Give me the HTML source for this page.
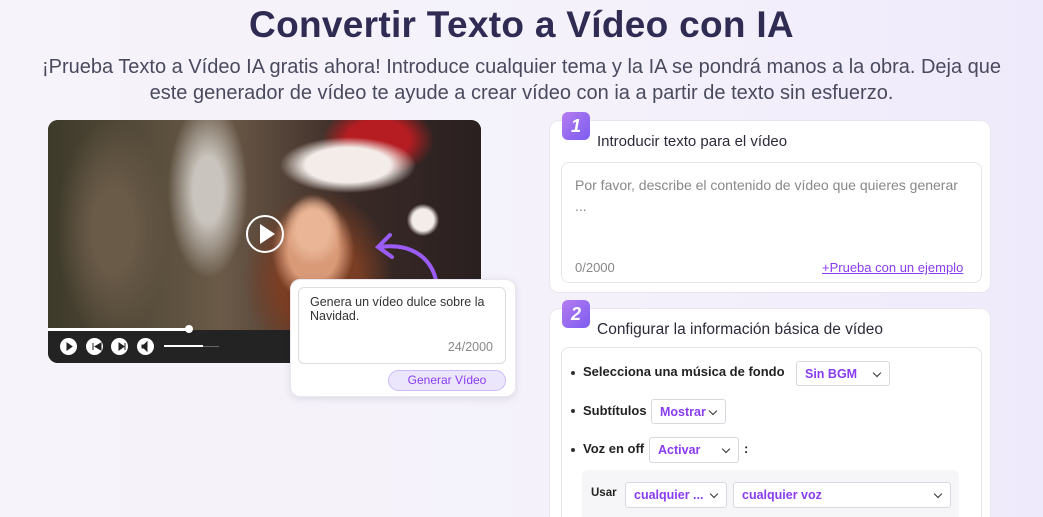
<!DOCTYPE html>
<html><head><meta charset="utf-8"><style>
*{margin:0;padding:0;box-sizing:border-box}
html,body{width:1043px;height:517px;overflow:hidden}
body{background:linear-gradient(90deg,#f6f3fa,#f4f1fb 60%,#efeafb);font-family:"Liberation Sans",sans-serif;position:relative;color:#2a2a3a}
.a{position:absolute}
h1{position:absolute;left:0;width:1043px;top:4px;text-align:center;font-size:37px;font-weight:bold;color:#2f2b52;letter-spacing:.3px}
.sub{position:absolute;left:0;width:1043px;top:54px;text-align:center;font-size:20px;line-height:26px;color:#4a4a5e}
.card{background:#fff;border:1px solid #e9e6f0;border-radius:10px}
.badge{width:28px;height:28px;border-radius:6px;background:linear-gradient(135deg,#b57cf0,#7b5cf0);color:#fff;font-weight:bold;font-style:italic;font-size:18px;text-align:center;line-height:28px}
.sel{border:1px solid #d8d8de;border-radius:3px;background:#fff;color:#8a3cf0;font-size:12.5px;padding-left:8px;display:flex;align-items:center;font-weight:bold}
.sel:after{content:"";position:absolute;right:9px;top:8px;width:5px;height:5px;border-right:1.5px solid #333;border-bottom:1.5px solid #333;transform:rotate(45deg)}
.lbl{font-size:13px;font-weight:bold;color:#222}
.dot{width:4px;height:4px;border-radius:50%;background:#333}
.cb{width:17px;height:17px;border-radius:50%;background:#fff}
</style></head><body>
<h1>Convertir Texto a Vídeo con IA</h1>
<div class="sub">¡Prueba Texto a Vídeo IA gratis ahora! Introduce cualquier tema y la IA se pondrá manos a la obra. Deja que<br>este generador de vídeo te ayude a crear vídeo con ia a partir de texto sin esfuerzo.</div>

<div class="a" style="left:48px;top:120px;width:433px;height:243px;border-radius:10px;overflow:hidden;background:#3a2a22">
 <div class="a" style="left:0;top:0;width:433px;height:210px;background:
 radial-gradient(ellipse 32px 40px at 265px 110px,#e9b596 50%,transparent 90%),
 radial-gradient(ellipse 55px 70px at 265px 130px,#d99a78 45%,transparent 75%),
 radial-gradient(ellipse 85px 35px at 300px 45px,#f3ece8 50%,transparent 80%),
 radial-gradient(ellipse 70px 45px at 330px 20px,#b51d22 45%,transparent 80%),
 radial-gradient(ellipse 18px 18px at 375px 100px,#f3ece8 60%,transparent 90%),
 radial-gradient(ellipse 100px 120px at 270px 160px,#7a3e24 40%,transparent 75%),
 radial-gradient(ellipse 70px 140px at 65px 110px,#6a5a48 30%,transparent 80%),
 radial-gradient(ellipse 50px 110px at 160px 70px,#c9c4bd 30%,transparent 80%),
 linear-gradient(90deg,#3d3a2a,#6b5a48 40%,#3a2a26 70%,#2a2020)"></div>
 <div class="a" style="left:0;top:210px;width:433px;height:33px;background:#232323"></div>
 <div class="a" style="left:0;top:208px;width:140px;height:3px;background:#fff"></div>
 <div class="a" style="left:137px;top:205px;width:8px;height:8px;border-radius:50%;background:#fff"></div>
 <div class="a cb" style="left:12px;top:218px"></div><div class="a cb" style="left:38px;top:218px"></div><div class="a cb" style="left:63px;top:218px"></div><div class="a cb" style="left:89px;top:218px"></div>
 <svg class="a" style="left:12px;top:218px" width="100" height="17"><path d="M7 5 L12 8.5 L7 12Z M33 5v7 M41 5 L35 8.5 L41 12Z M59 5 L64 8.5 L59 12Z M65 5v7 M82 7h2l3-3v9l-3-3h-2Z" fill="#222" stroke="#222" stroke-width="1"/></svg>
 <div class="a" style="left:116px;top:226px;width:55px;height:1px;background:#666"></div>
 <div class="a" style="left:116px;top:225px;width:39px;height:2px;background:#fff"></div>
 <div class="a" style="left:198px;top:95px;width:38px;height:38px;border-radius:50%;border:2px solid #fff"></div>
 <div class="a" style="left:212px;top:104px;width:0;height:0;border-left:15px solid #fff;border-top:10px solid transparent;border-bottom:10px solid transparent"></div>
 <svg class="a" style="left:320px;top:105px" width="75" height="60"><path d="M68 55 C62 30 40 18 12 22 M22 10 L10 22 L24 32" stroke="#9b5cf6" stroke-width="4" fill="none" stroke-linecap="round"/></svg>
</div>

<div class="a card" style="left:290px;top:279px;width:226px;height:118px;border-radius:10px;box-shadow:0 2px 8px rgba(0,0,0,.1)"></div>
<div class="a" style="left:298px;top:287px;width:208px;height:77px;border:1px solid #ddd;border-radius:6px;font-size:12.5px;line-height:14px;padding:7px 11px;color:#333">Genera un vídeo dulce sobre la Navidad.<div class="a" style="right:12px;bottom:9px;color:#888">24/2000</div></div>
<div class="a" style="left:388px;top:370px;width:118px;height:21px;border:1px solid #cbbcf5;border-radius:11px;background:#ece6fd;color:#8a3cf0;font-size:12px;text-align:center;line-height:19px">Generar Vídeo</div>

<div class="a card" style="left:549px;top:120px;width:442px;height:173px"></div>
<div class="a badge" style="left:562px;top:112px">1</div>
<div class="a" style="left:597px;top:133px;font-size:15px;color:#2a2a3a">Introducir texto para el vídeo</div>
<div class="a" style="left:561px;top:162px;width:421px;height:121px;border:1px solid #e4e4ea;border-radius:8px"></div>
<div class="a" style="left:575px;top:175px;font-size:14px;color:#888;line-height:21px">Por favor, describe el contenido de vídeo que quieres generar<br>...</div>
<div class="a" style="left:575px;top:260px;font-size:13px;color:#888">0/2000</div>
<div class="a" style="left:822px;top:260px;font-size:13px;color:#8a3cf0;text-decoration:underline">+Prueba con un ejemplo</div>

<div class="a card" style="left:549px;top:308px;width:442px;height:209px;border-bottom:none;border-radius:10px 10px 0 0"></div>
<div class="a badge" style="left:562px;top:300px">2</div>
<div class="a" style="left:597px;top:321px;font-size:15.5px;color:#2a2a3a">Configurar la información básica de vídeo</div>
<div class="a" style="left:561px;top:347px;width:421px;height:170px;border:1px solid #e4e4ea;border-bottom:none;border-radius:8px 8px 0 0"></div>
<div class="a dot" style="left:571px;top:371px"></div><div class="a lbl" style="left:583px;top:364px">Selecciona una música de fondo</div>
<div class="a sel" style="left:796px;top:361px;width:94px;height:25px">Sin BGM</div>
<div class="a dot" style="left:571px;top:409px"></div><div class="a lbl" style="left:583px;top:403px">Subtítulos</div>
<div class="a sel" style="left:651px;top:399px;width:75px;height:25px">Mostrar</div>
<div class="a dot" style="left:571px;top:448px"></div><div class="a lbl" style="left:583px;top:441px">Voz en off</div>
<div class="a sel" style="left:649px;top:437px;width:90px;height:26px">Activar</div>
<div class="a lbl" style="left:744px;top:441px">:</div>
<div class="a" style="left:582px;top:470px;width:377px;height:47px;background:#f6f6f8;border-radius:6px 6px 0 0"></div>
<div class="a lbl" style="left:591px;top:487px;font-size:11.5px">Usar</div>
<div class="a sel" style="left:625px;top:482px;width:102px;height:26px">cualquier ...</div>
<div class="a sel" style="left:733px;top:482px;width:218px;height:26px">cualquier voz</div>
</body></html>
